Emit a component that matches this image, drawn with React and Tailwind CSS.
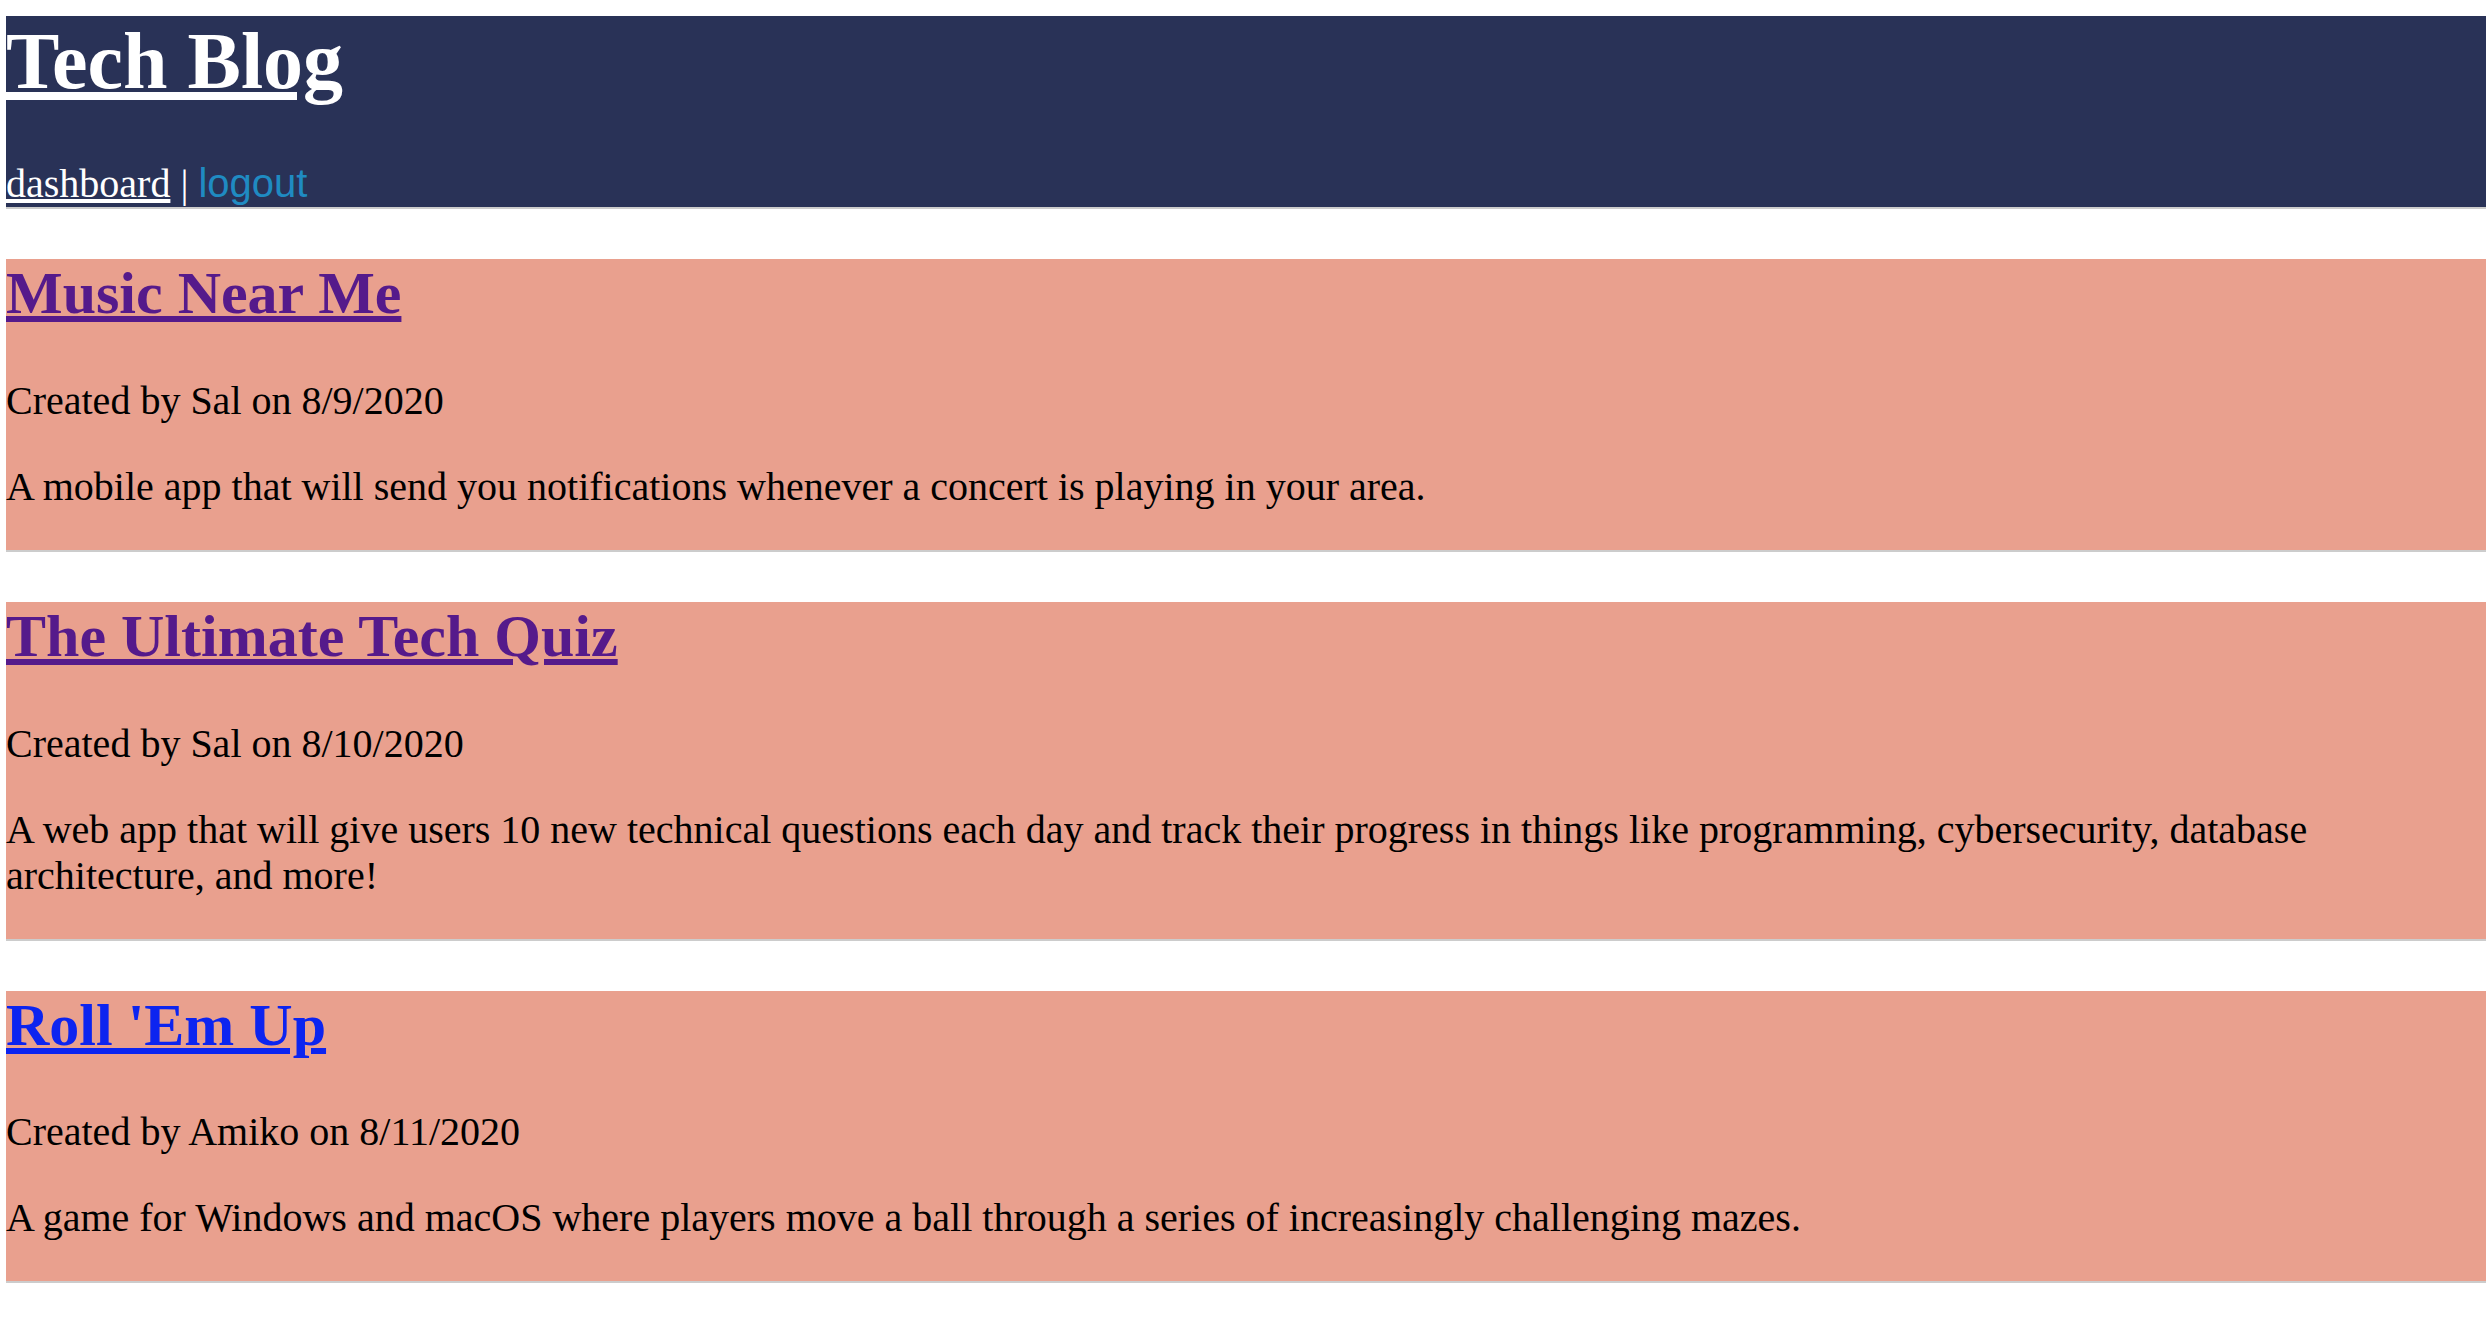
import React from "react";

const posts = [
  {
    title: "Music Near Me",
    visited: true,
    author: "Sal",
    date: "8/9/2020",
    body: "A mobile app that will send you notifications whenever a concert is playing in your area.",
  },
  {
    title: "The Ultimate Tech Quiz",
    visited: true,
    author: "Sal",
    date: "8/10/2020",
    body: "A web app that will give users 10 new technical questions each day and track their progress in things like programming, cybersecurity, database architecture, and more!",
  },
  {
    title: "Roll 'Em Up",
    visited: false,
    author: "Amiko",
    date: "8/11/2020",
    body: "A game for Windows and macOS where players move a ball through a series of increasingly challenging mazes.",
  },
];

export default function App() {
  return (
    <div className="min-h-screen bg-white px-[6px] pt-[16px] font-['Liberation_Serif','Times_New_Roman',serif] text-[40px] leading-[1.149] text-black">
      <header className="bg-[#293257] border-b-2 border-[#cccccc]">
        <h1 className="m-0 mb-[53px] text-[80px] font-bold leading-[1.149]">
          <a href="#" className="text-white underline">
            Tech Blog
          </a>
        </h1>
        <nav className="leading-[1.149]">
          <a href="#" className="text-white underline">
            dashboard
          </a>{" "}
          <span className="text-white">|</span>{" "}
          <button
            type="button"
            className="cursor-pointer bg-transparent p-0 font-['Liberation_Sans',Arial,sans-serif] text-[40px] leading-[1.149] text-[#1f8bc2]"
          >
            logout
          </button>
        </nav>
      </header>

      <main>
        {posts.map((p) => (
          <article
            key={p.title}
            className="mt-[50px] bg-[#e9a08e] pb-[40px] border-b-2 border-[#cccccc]"
          >
            <h2 className="m-0 mb-[50px] text-[60px] font-bold leading-[1.149]">
              <a
                href="#"
                className={
                  p.visited
                    ? "text-[#551a8b] underline"
                    : "text-[#0c24f0] underline"
                }
              >
                {p.title}
              </a>
            </h2>
            <p className="m-0 mb-[40px]">
              Created by {p.author} on {p.date}
            </p>
            <p className="m-0">{p.body}</p>
          </article>
        ))}
      </main>
    </div>
  );
}
